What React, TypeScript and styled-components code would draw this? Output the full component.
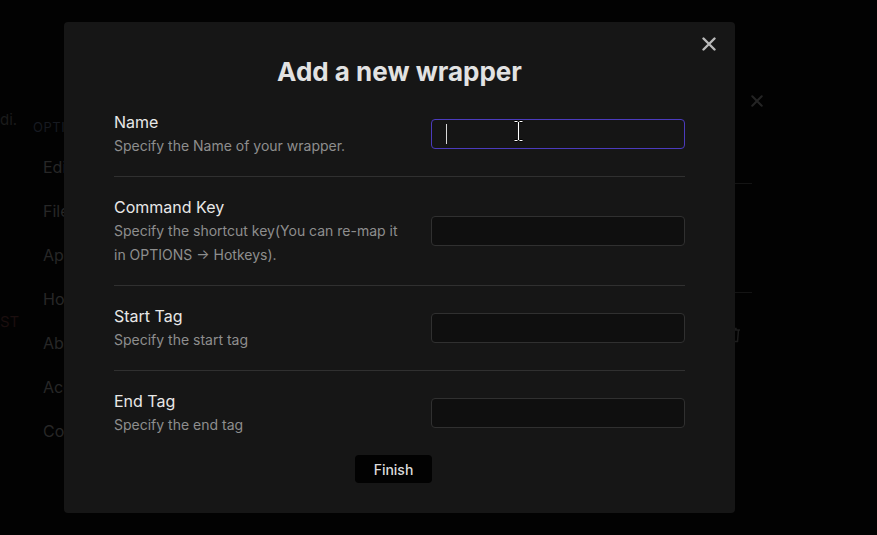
import React from "react";
import styled, { createGlobalStyle } from "styled-components";

const GlobalStyle = createGlobalStyle`
  html, body {
    margin: 0;
    padding: 0;
    background: #020202;
    font-family: Inter, "Noto Sans", sans-serif;
    overflow: hidden;
  }
`;

const sideItems = ["Editor", "Files", "Appearance", "Hotkeys", "About", "Account", "Community"];

const fields = [
  { label: "Name", desc: "Specify the Name of your wrapper.", focused: true },
  {
    label: "Command Key",
    desc: "Specify the shortcut key(You can re-map it in OPTIONS \u2192 Hotkeys).",
  },
  { label: "Start Tag", desc: "Specify the start tag" },
  { label: "End Tag", desc: "Specify the end tag" },
];

const App: React.FC = () => {
  return (
    <>
      <GlobalStyle />
      <Page>
        <EdgeColumn>
          <EdgeText $top={110}>di.</EdgeText>
          <EdgeText $top={182} $red>ST</EdgeText>
        </EdgeColumn>
        <Sidebar>
          <SideHeader>OPTIONS</SideHeader>
          {sideItems.map((s) => (
            <SideItem key={s}>{s}</SideItem>
          ))}
        </Sidebar>
        <Main>
          <MainTop>
            <CloseIcon size={12} color="#242424" />
          </MainTop>
          <List>
            <ListRow $height={88} />
            <ListRow $height={108} />
            <TrashRow>
              <TrashIcon />
            </TrashRow>
          </List>
        </Main>
      </Page>

      <Overlay>
        <Modal>
          <CloseButton aria-label="Close">
            <CloseIcon size={14} color="#b9b9b9" />
          </CloseButton>
          <Title>Add a new wrapper</Title>
          {fields.map((f, i) => (
            <Row key={f.label} $last={i === fields.length - 1}>
              <Info>
                <Label>{f.label}</Label>
                <Desc>{f.desc}</Desc>
              </Info>
              <InputWrap>
                <Input $focused={!!f.focused} />
                {f.focused && <Caret />}
                {f.focused && <IBeam />}
              </InputWrap>
            </Row>
          ))}
          <Footer>
            <FinishButton>Finish</FinishButton>
          </Footer>
        </Modal>
      </Overlay>
    </>
  );
};

const CloseIcon: React.FC<{ size: number; color: string }> = ({ size, color }) => (
  <svg width={size} height={size} viewBox="0 0 14 14" fill="none">
    <path d="M1.5 1.5 L12.5 12.5 M12.5 1.5 L1.5 12.5" stroke={color} strokeWidth="2.4" strokeLinecap="round" />
  </svg>
);

const TrashIcon: React.FC = () => (
  <svg width="14" height="16" viewBox="0 0 14 16" fill="none">
    <path d="M1 3h12M5 3V1.5h4V3M2.5 3l1 11.5h7l1-11.5" stroke="#1d1d1d" strokeWidth="1.5" />
  </svg>
);

const IBeam: React.FC = () => (
  <Beam width="11" height="22" viewBox="0 0 11 22" fill="none">
    <path d="M1.5 1.5h3M6.5 1.5h3M5.5 2v18M1.5 20.5h3M6.5 20.5h3" stroke="#000" strokeWidth="3" />
    <path d="M1.5 1.5h3M6.5 1.5h3M5.5 2v18M1.5 20.5h3M6.5 20.5h3" stroke="#fff" strokeWidth="1.2" />
  </Beam>
);

/* background page, dimmed */

const Page = styled.div`
  display: flex;
  height: 100vh;
  background: #020202;
`;

const EdgeColumn = styled.div`
  width: 30px;
  flex-shrink: 0;
  overflow: hidden;
  display: flex;
  flex-direction: column;
`;

const EdgeText = styled.div<{ $top: number; $red?: boolean }>`
  margin-top: ${(p) => p.$top}px;
  font-size: 15px;
  line-height: 20px;
  color: ${(p) => (p.$red ? "#1b0e0e" : "#1b1b1b")};
`;

const Sidebar = styled.div`
  width: 80px;
  flex-shrink: 0;
  padding: 118px 0 0 3px;
  overflow: hidden;
  display: flex;
  flex-direction: column;
`;

const SideHeader = styled.div`
  font-size: 13px;
  line-height: 18px;
  color: #171a21;
  letter-spacing: 0.5px;
  margin-bottom: 9px;
`;

const SideItem = styled.div`
  padding-left: 10px;
  font-size: 16px;
  line-height: 44px;
  color: #272727;
  white-space: nowrap;
`;

const Main = styled.div`
  flex: 1;
  padding-right: 114px;
  display: flex;
  flex-direction: column;
`;

const MainTop = styled.div`
  height: 95px;
  padding-top: 95px;
  box-sizing: border-box;
  display: flex;
  justify-content: flex-end;
`;

const List = styled.div`
  margin-right: 11px;
  display: flex;
  flex-direction: column;
`;

const ListRow = styled.div<{ $height: number }>`
  height: ${(p) => p.$height}px;
  flex-shrink: 0;
  border-bottom: 1px solid #141414;
`;

const TrashRow = styled.div`
  display: flex;
  padding-top: 34px;
  margin-left: 614px;
`;

/* modal */

const Overlay = styled.div`
  position: fixed;
  inset: 0;
  padding: 22px 0 0 64px;
  display: flex;
  align-items: flex-start;
`;

const Modal = styled.div`
  position: relative;
  width: 671px;
  box-sizing: border-box;
  padding: 34px 50px 30px;
  background: #161616;
  border-radius: 4px;
  display: flex;
  flex-direction: column;
`;

const CloseButton = styled.button`
  position: absolute;
  top: 15px;
  right: 19px;
  padding: 0;
  border: none;
  background: none;
  display: flex;
  cursor: pointer;
`;

const Title = styled.h1`
  margin: 0 0 4px;
  text-align: center;
  font-size: 26px;
  line-height: 32px;
  font-weight: 700;
  color: #e2e2e2;
`;

const Row = styled.div<{ $last: boolean }>`
  display: flex;
  justify-content: space-between;
  align-items: center;
  padding: 18px 0;
  border-bottom: ${(p) => (p.$last ? "none" : "1px solid #303030")};
`;

const Info = styled.div`
  max-width: 292px;
  display: flex;
  flex-direction: column;
`;

const Label = styled.div`
  font-size: 16px;
  line-height: 24px;
  font-weight: 400;
  color: #e8e8e8;
`;

const Desc = styled.div`
  font-size: 14px;
  line-height: 24px;
  color: #8e8e8e;
`;

const InputWrap = styled.div`
  position: relative;
  display: flex;
`;

const Input = styled.input<{ $focused: boolean }>`
  width: 254px;
  height: 30px;
  box-sizing: border-box;
  padding: 0 14px;
  border-radius: 4px;
  border: 1px solid ${(p) => (p.$focused ? "#4b3bbd" : "#303030")};
  background: ${(p) => (p.$focused ? "#151515" : "#0f0f0f")};
  color: #e0e0e0;
  caret-color: transparent;
  font-family: inherit;
  font-size: 14px;
  outline: none;
`;

const Caret = styled.span`
  position: absolute;
  left: 15px;
  top: 5px;
  width: 1px;
  height: 20px;
  background: #d8d8d8;
  pointer-events: none;
`;

const Beam = styled.svg`
  position: absolute;
  left: 82px;
  top: 1px;
  pointer-events: none;
`;

const Footer = styled.div`
  display: flex;
  justify-content: center;
`;

const FinishButton = styled.button`
  margin-left: -12px;
  width: 77px;
  height: 28px;
  border: none;
  border-radius: 4px;
  background: #020202;
  color: #dcdcdc;
  font-family: inherit;
  font-size: 14px;
  font-weight: 500;
  cursor: pointer;
`;

export default App;
